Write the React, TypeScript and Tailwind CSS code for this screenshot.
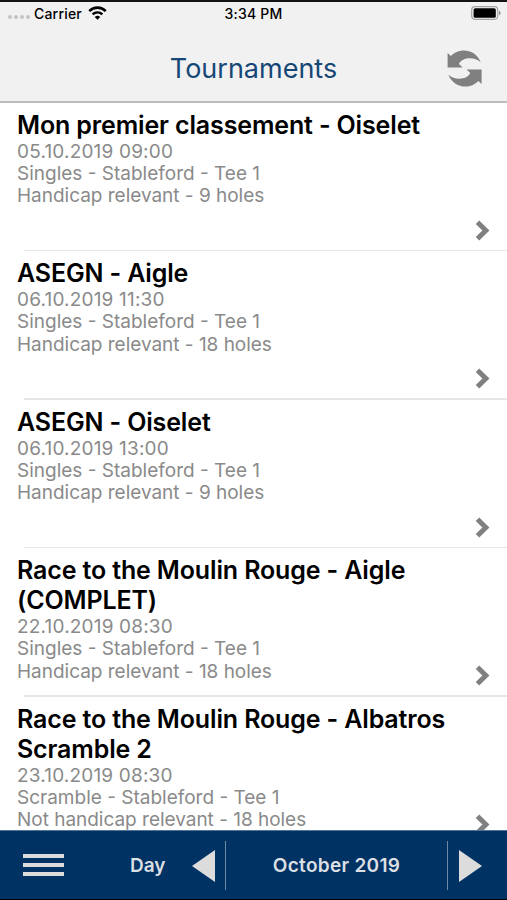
interface Tournament {
  title: string[];
  date: string;
  format: string;
  handicap: string;
}

const tournaments: Tournament[] = [
  {
    title: ['Mon premier classement - Oiselet'],
    date: '05.10.2019 09:00',
    format: 'Singles - Stableford - Tee 1',
    handicap: 'Handicap relevant - 9 holes',
  },
  {
    title: ['ASEGN - Aigle'],
    date: '06.10.2019 11:30',
    format: 'Singles - Stableford - Tee 1',
    handicap: 'Handicap relevant - 18 holes',
  },
  {
    title: ['ASEGN - Oiselet'],
    date: '06.10.2019 13:00',
    format: 'Singles - Stableford - Tee 1',
    handicap: 'Handicap relevant - 9 holes',
  },
  {
    title: ['Race to the Moulin Rouge - Aigle', '(COMPLET)'],
    date: '22.10.2019 08:30',
    format: 'Singles - Stableford - Tee 1',
    handicap: 'Handicap relevant - 18 holes',
  },
  {
    title: ['Race to the Moulin Rouge - Albatros', 'Scramble 2'],
    date: '23.10.2019 08:30',
    format: 'Scramble - Stableford - Tee 1',
    handicap: 'Not handicap relevant - 18 holes',
  },
];

function StatusBar() {
  return (
    <div className="grid h-[22px] grid-cols-3 items-center text-[14px] font-medium text-black">
      <div className="flex items-center pl-[8px]">
        <div className="mt-[7px] flex gap-[2px]">
          {[0, 1, 2, 3].map((dot) => (
            <span key={dot} className="size-[4px] rounded-full bg-[#c4c4c4]" />
          ))}
        </div>
        <span className="ml-[4px] tracking-[0.2px]">Carrier</span>
        <svg className="ml-[6px]" width="19" height="14" viewBox="0 0 20 15" fill="none">
          <path d="M1.2 5.5a12.3 12.3 0 0 1 17.6 0" stroke="#000" strokeWidth="2.8" />
          <path d="M4.8 9a7.3 7.3 0 0 1 10.4 0" stroke="#000" strokeWidth="2.6" />
          <path d="M10 14.8l-3-3a4.3 4.3 0 0 1 6 0z" fill="#000" />
        </svg>
      </div>
      <span className="text-center tracking-[0.2px]">3:34 PM</span>
      <div className="flex justify-end pr-[6px]">
        <svg width="30" height="14" viewBox="0 0 30 14">
          <rect x="0.7" y="0.7" width="26" height="12.6" rx="3.2" fill="none" stroke="#a3a3a3" strokeWidth="1.2" />
          <rect x="2.6" y="2.2" width="22.2" height="9.6" rx="1.6" fill="#000" />
          <path d="M28 4.8c2.1.7 2.1 3.7 0 4.4z" fill="#8c8c8c" />
        </svg>
      </div>
    </div>
  );
}

function Header() {
  return (
    <div className="grid h-[76px] grid-cols-[60px_1fr_60px] items-center pt-[13px]">
      <span />
      <h1 className="text-center text-[27px] leading-[34px] text-[#174776]">Tournaments</h1>
      <svg width="35" height="37" viewBox="0 0 35 37" fill="#808080">
        <path d="M.6 3l3.3 3C11-2.2 28-2.4 33.8 12.2C27.5 6.5 15 7 12 14L15.6 17.6H.6z" />
        <path d="M34.6 34l-3.3-3C24.2 39.2 7.2 39.4 1.4 24.8C7.7 30.5 20.2 30 23.2 23L19.6 19.4H34.6z" />
      </svg>
    </div>
  );
}

function TournamentRow({ item }: { item: Tournament }) {
  return (
    <li className="flex h-[148.6px] shrink-0 flex-col">
      <div className="flex min-h-0 flex-1 justify-between pl-[17px] pr-[17px] pt-[7px]">
        <div className="whitespace-nowrap">
          <h2 className="text-[25px] font-semibold leading-[30px] tracking-[-0.14px] text-black">
            {item.title.map((line) => (
              <span key={line} className="block">{line}</span>
            ))}
          </h2>
          <div className="pt-[1px] text-[19px] leading-[22.2px] text-[#8a8a8a]">
            <p className="tracking-[0.18px]">{item.date}</p>
            <p>{item.format}</p>
            <p className="tracking-[-0.02px]">{item.handicap}</p>
          </div>
        </div>
        <svg className="mb-[9px] shrink-0 self-end" width="15" height="21" viewBox="0 0 15 21" fill="none">
          <path d="M2.5 2.2l8.4 8.3-8.4 8.3" stroke="#808080" strokeWidth="5" />
        </svg>
      </div>
      <div className="ml-[24px] h-[1.5px] bg-[#e6e6e6]" />
    </li>
  );
}

function BottomBar() {
  return (
    <div className="flex h-[70px] shrink-0 items-center border-b border-t border-b-black border-t-[#537497] bg-[#003264] text-[19px] font-semibold text-[#dcdfe3]">
      <div className="mb-[1px] ml-[23px] flex w-[41px] flex-col gap-[5px]">
        <span className="h-[4px] bg-[#dcdcdc]" />
        <span className="h-[4px] bg-[#dcdcdc]" />
        <span className="h-[4px] bg-[#dcdcdc]" />
      </div>
      <span className="ml-[66px] w-[35px] whitespace-nowrap pt-[2px]">Day</span>
      <svg className="ml-[27px] mt-[1px]" width="23" height="32" viewBox="0 0 23 32" fill="#dcdcdc">
        <path d="M23 0v32L0 16z" />
      </svg>
      <span className="ml-[10px] h-[49px] w-px bg-[#6f89a5]" />
      <span className="w-[221px] pt-[2px] text-center tracking-[0.3px]">October 2019</span>
      <span className="h-[49px] w-px bg-[#6f89a5]" />
      <svg className="ml-[11px] mt-[1px]" width="23" height="32" viewBox="0 0 23 32" fill="#dcdcdc">
        <path d="M0 0v32l23-16z" />
      </svg>
    </div>
  );
}

export default function App() {
  return (
    <div className="flex h-[900px] w-[507px] flex-col overflow-hidden bg-white font-['Inter',sans-serif]">
      <div className="h-[102.5px] shrink-0 border-b-2 border-t-2 border-b-[#bdbdbd] border-t-[#151213] bg-[#f1f1f1]">
        <StatusBar />
        <Header />
      </div>
      <ul className="flex min-h-0 flex-1 flex-col overflow-hidden">
        {tournaments.map((item) => (
          <TournamentRow key={item.date} item={item} />
        ))}
      </ul>
      <BottomBar />
    </div>
  );
}
